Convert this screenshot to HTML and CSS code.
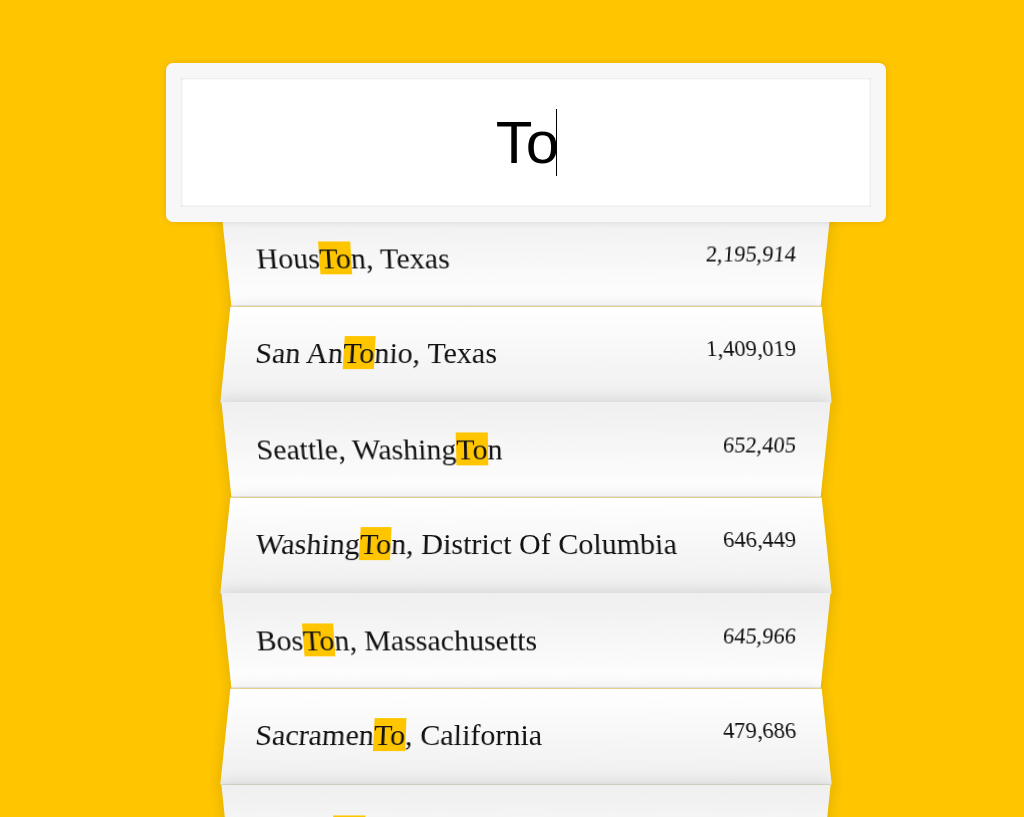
FILE: index.html
```html
<!DOCTYPE html>
<html lang="en">
<head>
<meta charset="utf-8">
<title>Type Ahead</title>
<link rel="stylesheet" href="styles.css">
</head>
<body>
  <form class="search-form">
    <div class="search"><span class="search-text">To</span><span class="caret"></span></div>
    <ul class="suggestions">
      <li><span class="name">Hous<span class="hl">To</span>n, Texas</span><span class="population">2,195,914</span></li>
      <li><span class="name">San An<span class="hl">To</span>nio, Texas</span><span class="population">1,409,019</span></li>
      <li><span class="name">Seattle, Washing<span class="hl">To</span>n</span><span class="population">652,405</span></li>
      <li><span class="name">Washing<span class="hl">To</span>n, District Of Columbia</span><span class="population">646,449</span></li>
      <li><span class="name">Bos<span class="hl">To</span>n, Massachusetts</span><span class="population">645,966</span></li>
      <li><span class="name">Sacramen<span class="hl">To</span>, California</span><span class="population">479,686</span></li>
      <li><span class="name">Arling<span class="hl">To</span>n, Texas</span><span class="population">379,577</span></li>
    </ul>
  </form>
</body>
</html>
```
FILE: styles.css
```css
html {
  box-sizing: border-box;
  background: #ffc600;
  font-family: "Liberation Serif", "Times New Roman", serif;
  font-size: 30px;
  overflow: hidden;
}

*, *::before, *::after {
  box-sizing: inherit;
}

body {
  margin: 0;
  padding: 63px 0 0 166px;
}

.search-form {
  width: 720px;
  margin: 0;
}

.search {
  position: relative;
  z-index: 2;
  margin: 0 0 -15px;
  padding: 30px;
  height: 159px;
  text-align: center;
  border: 15px solid #f7f7f7;
  border-radius: 7px;
  background: #fff;
  font-family: "Liberation Sans", Arial, sans-serif;
  font-size: 60px;
  line-height: 69px;
  color: #000;
  box-shadow: 0 0 7px rgba(0, 0, 0, 0.12), inset 0 0 3px rgba(0, 0, 0, 0.19);
  white-space: nowrap;
}

.caret {
  display: inline-block;
  width: 1px;
  height: 67px;
  margin-right: -1px;
  background: #000;
  vertical-align: top;
  margin-top: 1px;
  margin-left: -3px;
}

.suggestions {
  margin: 0 60px;
  padding: 0;
  position: relative;
}

.suggestions li {
  list-style: none;
  border-bottom: 1px solid #d8d8d8;
  box-shadow: 0 0 15px rgba(0, 0, 0, 0.14);
  margin: 0;
  padding: 30px;
  height: 95.6px;
  display: flex;
  justify-content: space-between;
  color: #111;
}

.suggestions li:nth-child(even) {
  transform: perspective(150px) rotateX(3deg) translateY(3px) scale(1.001);
  background: linear-gradient(to bottom, #ffffff 0%, #efefef 100%);
}

.suggestions li:nth-child(odd) {
  transform: perspective(150px) rotateX(-3deg) translateY(4.5px);
  background: linear-gradient(to top, #ffffff 0%, #efefef 100%);
}

.name {
  line-height: 34.5px;
}

.population {
  font-size: 22.5px;
  line-height: 26px;
}

.hl {
  background: #ffc600;
}
```
